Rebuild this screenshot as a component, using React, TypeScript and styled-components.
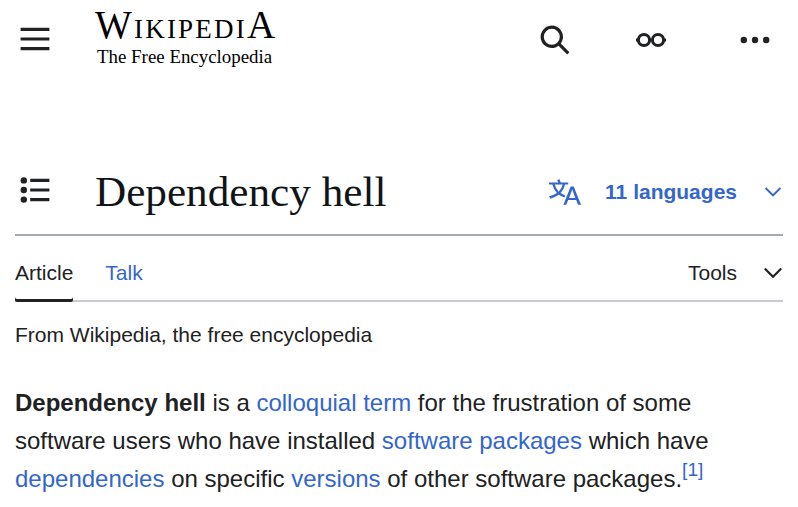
import React from "react";
import styled, { createGlobalStyle } from "styled-components";

const GlobalStyle = createGlobalStyle`
  html, body {
    margin: 0;
    padding: 0;
    background: #fff;
  }
  body {
    font-family: "Liberation Sans", Arial, sans-serif;
    color: #202122;
    overflow: hidden;
  }
`;

const Page = styled.div`
  width: 798px;
  height: 507px;
  overflow: hidden;
`;

const Header = styled.header`
  display: flex;
  align-items: flex-start;
  height: 80px;
  padding: 0 15px;
`;

const IconSlot = styled.span<{ $size?: number; $color?: string }>`
  display: inline-flex;
  flex: none;
  width: ${(p) => p.$size ?? 32}px;
  height: ${(p) => p.$size ?? 32}px;
  color: ${(p) => p.$color ?? "#202122"};
  svg {
    display: block;
    width: 100%;
    height: 100%;
    fill: currentColor;
  }
`;

const MenuButton = styled.div`
  margin: 23px 0 0 4px;
`;

const Logo = styled.div`
  margin: 6px 0 0 44px;
  font-family: "Liberation Serif", "Times New Roman", serif;
  color: #000;
`;

const Wordmark = styled.div`
  font-size: 39px;
  line-height: 38px;
  font-variant: small-caps;
  letter-spacing: 2.2px;
  white-space: nowrap;
`;

const Tagline = styled.div`
  font-size: 18.9px;
  line-height: 22px;
  margin: 2px 0 0 2px;
  white-space: nowrap;
`;

const HeaderActions = styled.div`
  display: flex;
  gap: 64px;
  margin: 24px 12px 0 auto;
`;

const MoreSlot = styled(IconSlot)`
  margin-left: 8px;
`;

const TitleBar = styled.div`
  display: flex;
  align-items: center;
  height: 75px;
  margin: 74px 15px 0;
  padding-bottom: 5px;
  border-bottom: 2px solid #a2a9b1;
`;

const ContentsButton = styled.div`
  margin-left: 4px;
`;

const Title = styled.h1`
  margin: 0 0 0 44px;
  font-family: "Liberation Serif", "Times New Roman", serif;
  font-size: 43.2px;
  font-weight: 400;
  color: #101418;
  line-height: 54px;
`;

const Languages = styled.div`
  display: flex;
  align-items: center;
  margin-left: auto;
  padding-right: 1px;
  color: #3366cc;
  font-size: 21px;
  font-weight: 700;
`;

const LanguageLabel = styled.span`
  margin: 0 27px 0 24px;
`;

const TabBar = styled.nav`
  display: flex;
  align-items: flex-end;
  height: 64px;
  margin: 0 15px;
  border-bottom: 2px solid #c8ccd1;
  font-size: 21px;
`;

const Tab = styled.div<{ $active?: boolean }>`
  height: 100%;
  box-sizing: border-box;
  padding-top: 23px;
  margin-right: 32px;
  line-height: 27px;
  color: ${(p) => (p.$active ? "#202122" : "#3366cc")};
  ${(p) =>
    p.$active &&
    `
    box-shadow: inset 0 -3px 0 #202122;
    margin-bottom: -2px;
    height: calc(100% + 2px);
    border-radius: 0 0 2px 2px;
  `}
`;

const Tools = styled.div`
  display: flex;
  align-items: center;
  align-self: stretch;
  margin-left: auto;
  gap: 26px;
  padding-top: 10px;
`;

const Subtitle = styled.div`
  margin: 19px 15px 0;
  font-size: 21px;
  line-height: 27px;
`;

const Paragraph = styled.p`
  margin: 36px 15px 0;
  font-size: 24px;
  line-height: 38px;
`;

const WikiLink = styled.a`
  color: #3366cc;
  text-decoration: none;
`;

const Reference = styled.sup`
  font-size: 19.2px;
  line-height: 1;
  vertical-align: 11px;
`;

const MenuIcon = () => (
  <svg viewBox="0 0 20 20"><path d="M1 3v2h18V3zm0 8h18V9H1zm0 6h18v-2H1z" /></svg>
);

const SearchIcon = () => (
  <svg viewBox="0 0 20 20"><path d="M12.2 13.6a7 7 0 1 1 1.4-1.4l5.4 5.4-1.4 1.4zM3 8a5 5 0 1 0 10 0A5 5 0 0 0 3 8" /></svg>
);

const ReadingIcon = () => (
  <svg viewBox="0 0 20 20">
    <g fill="none" stroke="currentColor" strokeWidth="1.9">
      <circle cx="5.6" cy="10" r="3.5" />
      <circle cx="14.4" cy="10" r="3.5" />
      <path d="M.6 10h1.5M9.1 10h1.8M17.9 10h1.5" />
    </g>
  </svg>
);

const EllipsisIcon = () => (
  <svg viewBox="0 0 20 20">
    <circle cx="10" cy="10" r="2" />
    <circle cx="3" cy="10" r="2" />
    <circle cx="17" cy="10" r="2" />
  </svg>
);

const ListIcon = () => (
  <svg viewBox="0 0 20 20">
    <path d="M7 15h12v2H7zm0-6h12v2H7zm0-6h12v2H7z" />
    <circle cx="3" cy="4" r="2" />
    <circle cx="3" cy="10" r="2" />
    <circle cx="3" cy="16" r="2" />
  </svg>
);

const LanguageIcon = () => (
  <svg viewBox="0 0 20 20">
    <path d="M20 18h-1.44a.6.6 0 0 1-.4-.12.8.8 0 0 1-.23-.31L17 15h-5l-1 2.54a.8.8 0 0 1-.22.3.6.6 0 0 1-.4.14H9l4.55-11.47h1.89zm-3.53-4.31L14.89 9.5a12 12 0 0 1-.39-1.24q-.09.37-.19.69l-.19.56-1.58 4.19zm-6.3-1.58a13.4 13.4 0 0 1-2.91-1.41 11.46 11.46 0 0 0 2.81-5.37H12V4H7.31a4 4 0 0 0-.2-.56C6.87 2.79 6.6 2 6.6 2l-1.47.5s.4.89.6 1.5H0v1.33h2.15A11.23 11.23 0 0 0 5 10.7a17.2 17.2 0 0 1-5 2.1q.56.82.87 1.38a23.3 23.3 0 0 0 5.22-2.51 15.6 15.6 0 0 0 3.56 1.77zM3.63 5.33h4.91a8.1 8.1 0 0 1-2.45 4.45 9.1 9.1 0 0 1-2.46-4.45" />
  </svg>
);

const ChevronIcon = () => (
  <svg viewBox="0 0 20 20"><path d="m17.5 4.75-7.5 7.5-7.5-7.5L1 6.25l9 9 9-9z" /></svg>
);

const App: React.FC = () => {
  return (
    <Page>
      <GlobalStyle />
      <Header>
        <MenuButton>
          <IconSlot><MenuIcon /></IconSlot>
        </MenuButton>
        <Logo>
          <Wordmark>WikipediA</Wordmark>
          <Tagline>The Free Encyclopedia</Tagline>
        </Logo>
        <HeaderActions>
          <IconSlot><SearchIcon /></IconSlot>
          <IconSlot><ReadingIcon /></IconSlot>
          <MoreSlot><EllipsisIcon /></MoreSlot>
        </HeaderActions>
      </Header>
      <TitleBar>
        <ContentsButton>
          <IconSlot><ListIcon /></IconSlot>
        </ContentsButton>
        <Title>Dependency hell</Title>
        <Languages>
          <IconSlot $color="#3366cc"><LanguageIcon /></IconSlot>
          <LanguageLabel>11 languages</LanguageLabel>
          <IconSlot $size={18} $color="#3366cc"><ChevronIcon /></IconSlot>
        </Languages>
      </TitleBar>
      <TabBar>
        <Tab $active>Article</Tab>
        <Tab>Talk</Tab>
        <Tools>
          Tools
          <IconSlot $size={20}><ChevronIcon /></IconSlot>
        </Tools>
      </TabBar>
      <Subtitle>From Wikipedia, the free encyclopedia</Subtitle>
      <Paragraph>
        <b>Dependency hell</b> is a <WikiLink href="#">colloquial term</WikiLink> for the frustration of some
        software users who have installed <WikiLink href="#">software packages</WikiLink> which have{" "}
        <WikiLink href="#">dependencies</WikiLink> on specific <WikiLink href="#">versions</WikiLink> of other
        software packages.<Reference><WikiLink href="#">[1]</WikiLink></Reference>
      </Paragraph>
    </Page>
  );
};

export default App;
